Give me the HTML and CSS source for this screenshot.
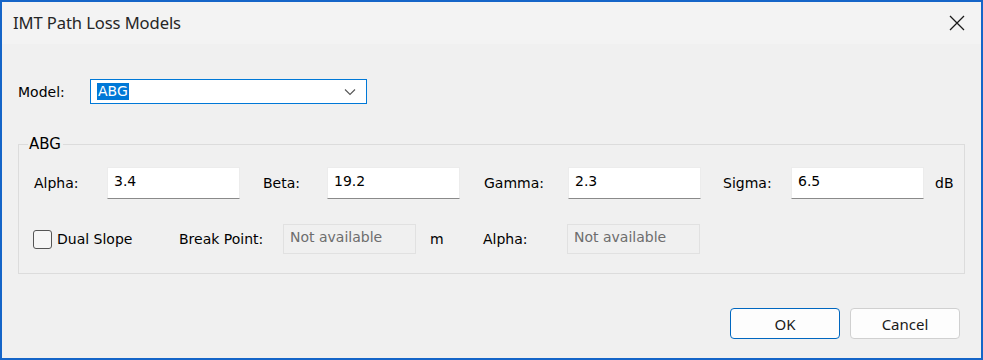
FILE: index.html
```html
<!DOCTYPE html>
<html>
<head>
<meta charset="utf-8">
<link rel="stylesheet" href="styles.css">
</head>
<body>
<div class="window">
  <div class="titlebar">
    <span class="title">IMT Path Loss Models</span>
    <span class="close">
      <svg width="16" height="16" viewBox="0 0 16 16"><path d="M1 1 L15 15 M15 1 L1 15" stroke="#1a1a1a" stroke-width="1.3" fill="none"/></svg>
    </span>
  </div>
  <div class="content">
    <div class="model-row">
      <span class="model-label">Model:</span>
      <div class="combo">
        <span class="sel">ABG</span>
        <svg class="chev" width="12" height="8" viewBox="0 0 12 8"><path d="M1 1.5 L6 6.5 L11 1.5" stroke="#555" stroke-width="1.1" fill="none"/></svg>
      </div>
    </div>
    <fieldset class="group">
      <legend>ABG</legend>
      <div class="row row1">
        <span class="lbl w-alpha">Alpha:</span>
        <div class="field">3.4</div>
        <span class="lbl w-beta">Beta:</span>
        <div class="field">19.2</div>
        <span class="lbl w-gamma">Gamma:</span>
        <div class="field">2.3</div>
        <span class="lbl w-sigma">Sigma:</span>
        <div class="field">6.5</div>
        <span class="unit-db">dB</span>
      </div>
      <div class="row row2">
        <span class="check"></span>
        <span class="lbl w-dual">Dual Slope</span>
        <span class="lbl w-break">Break Point:</span>
        <div class="field disabled">Not available</div>
        <span class="lbl w-m">m</span>
        <span class="lbl w-alpha2">Alpha:</span>
        <div class="field disabled">Not available</div>
      </div>
    </fieldset>
    <div class="buttons">
      <button class="btn primary">OK</button>
      <button class="btn">Cancel</button>
    </div>
  </div>
</div>
</body>
</html>
```

FILE: styles.css
```css
* { box-sizing: border-box; }
html, body { margin: 0; padding: 0; }
body {
  width: 983px;
  height: 360px;
  overflow: hidden;
  background: #f0f0f0;
  font-family: Tahoma, "DejaVu Sans", sans-serif;
  font-size: 14px;
  color: #000;
}
.window {
  width: 983px;
  height: 360px;
  border: 2px solid #1565c8;
  background: #f0f0f0;
  display: flex;
  flex-direction: column;
}
.titlebar {
  height: 42px;
  background: #f3f3f3;
  display: flex;
  align-items: center;
  justify-content: space-between;
  padding: 0 16px 0 11px;
  flex: none;
}
.title {
  font-family: "Noto Sans", sans-serif;
  font-size: 16.6px;
  color: #262626;
  letter-spacing: -0.1px;
  position: relative;
  top: -1px;
}
.close { display: flex; width: 16px; height: 16px; }
.content {
  flex: 1;
  padding: 35px 16px 0 16px;
  display: flex;
  flex-direction: column;
}
.model-row {
  display: flex;
  align-items: center;
  height: 25px;
}
.model-label { width: 72px; }
.combo {
  width: 277px;
  height: 25px;
  background: #fff;
  border: 1px solid #0078d7;
  display: flex;
  align-items: center;
  justify-content: space-between;
  padding: 0 10px 0 6px;
}
.sel {
  background: #0078d7;
  color: #fff;
  padding: 0 1px;
  line-height: 17px;
}
.chev { display: block; }
.group {
  margin: 31px 0 0 0;
  padding: 14px 0 0 15px;
  border: 1px solid #dcdcdc;
  height: 139px;
  min-width: 0;
}
.group legend {
  margin-left: -6px;
  padding: 0 2px 0 1px;
  font-size: 15px;
  line-height: 18px;
}
.row {
  display: flex;
  align-items: center;
}
.row1 { height: 32px; }
.row2 { height: 30px; margin-top: 25px; }
.lbl { flex: none; }
.w-alpha { width: 73px; }
.w-beta { width: 64px; margin-left: 23px; }
.w-gamma { width: 84px; margin-left: 24px; }
.w-sigma { width: 68px; margin-left: 22px; }
.w-alpha2 { width: 84px; }
.unit-db { margin-left: 11px; }
.field {
  width: 133px;
  height: 32px;
  background: #fff;
  border: 1px solid #ececec;
  border-bottom: 1px solid #8a8a8a;
  padding: 5px 0 0 6px;
  line-height: 17px;
  flex: none;
}
.field.disabled {
  height: 30px;
  background: #f0f0f0;
  border: 1px solid #e1e1e1;
  color: #6d6d6d;
  padding-top: 4px;
}
.check {
  width: 19px;
  height: 19px;
  border: 1px solid #555;
  border-radius: 3px;
  background: #f6f6f6;
  margin-left: -1px;
  margin-right: 5px;
  flex: none;
}
.w-dual { width: 122px; }
.w-break { width: 104px; }
.w-m { width: 53px; margin-left: 14px; }
.buttons {
  display: flex;
  justify-content: flex-end;
  gap: 10px;
  margin-top: 34px;
  padding-right: 5px;
}
.btn {
  width: 110px;
  height: 31px;
  border: 1px solid #d0d0d0;
  border-radius: 4px;
  background: #fdfdfd;
  font-family: "Noto Sans", sans-serif;
  font-size: 15px;
  color: #1a1a1a;
  padding: 0;
}
.btn.primary { border-color: #0067c0; }
```
